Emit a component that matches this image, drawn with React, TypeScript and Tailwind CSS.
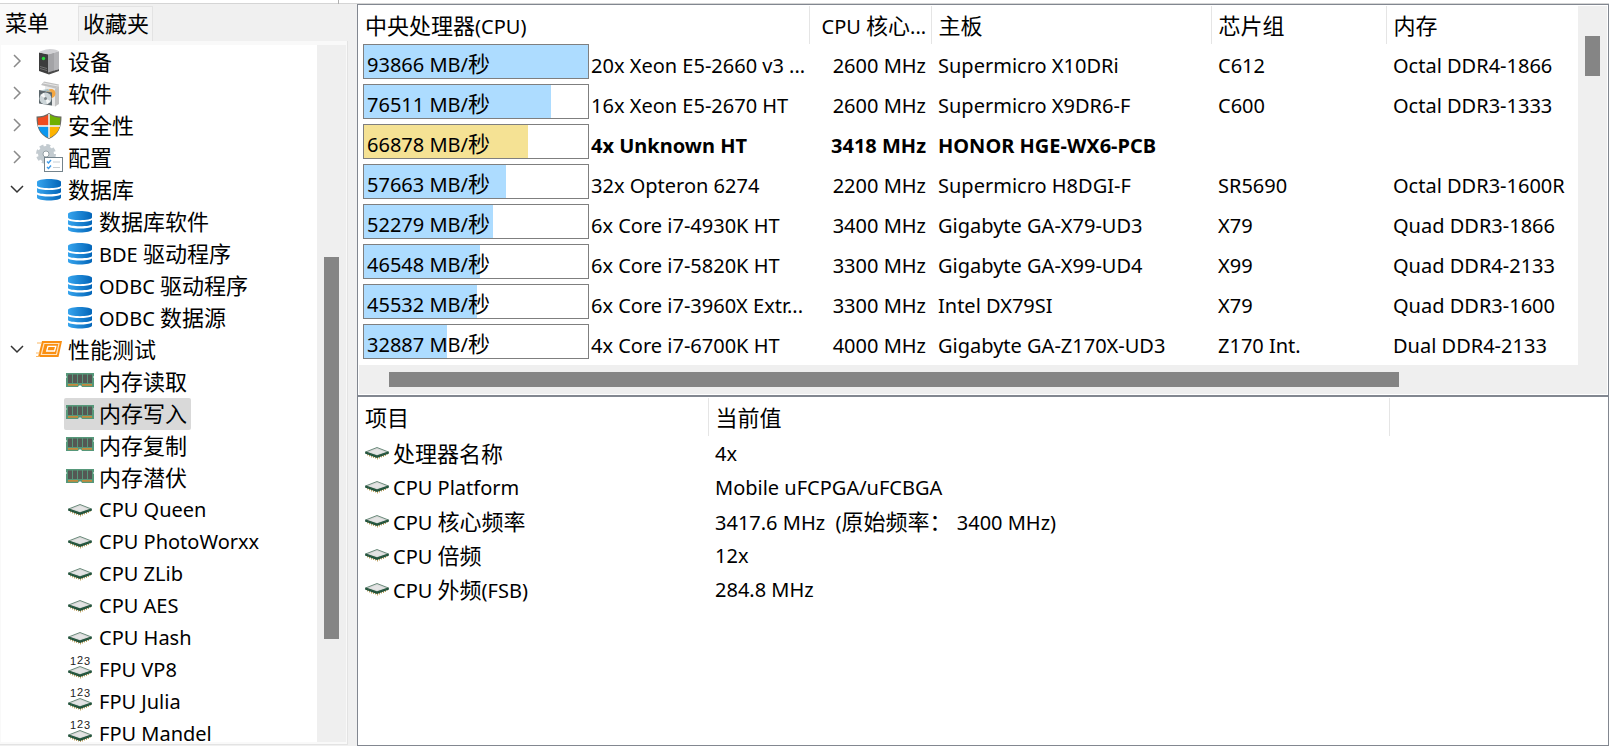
import type { ReactNode } from 'react';

type IconName = 'device' | 'software' | 'shield' | 'config' | 'database' | 'bench' | 'memory' | 'cpu' | 'fpu';

interface TreeItem {
  label: string;
  icon: IconName;
  state?: 'closed' | 'open';
  selected?: boolean;
}

interface Result {
  score: number;
  cpu: string;
  clock: string;
  board: string;
  chipset: string;
  memory: string;
  current?: boolean;
}

const tree: TreeItem[] = [
  { label: '设备', icon: 'device', state: 'closed' },
  { label: '软件', icon: 'software', state: 'closed' },
  { label: '安全性', icon: 'shield', state: 'closed' },
  { label: '配置', icon: 'config', state: 'closed' },
  { label: '数据库', icon: 'database', state: 'open' },
  { label: '数据库软件', icon: 'database' },
  { label: 'BDE 驱动程序', icon: 'database' },
  { label: 'ODBC 驱动程序', icon: 'database' },
  { label: 'ODBC 数据源', icon: 'database' },
  { label: '性能测试', icon: 'bench', state: 'open' },
  { label: '内存读取', icon: 'memory' },
  { label: '内存写入', icon: 'memory', selected: true },
  { label: '内存复制', icon: 'memory' },
  { label: '内存潜伏', icon: 'memory' },
  { label: 'CPU Queen', icon: 'cpu' },
  { label: 'CPU PhotoWorxx', icon: 'cpu' },
  { label: 'CPU ZLib', icon: 'cpu' },
  { label: 'CPU AES', icon: 'cpu' },
  { label: 'CPU Hash', icon: 'cpu' },
  { label: 'FPU VP8', icon: 'fpu' },
  { label: 'FPU Julia', icon: 'fpu' },
  { label: 'FPU Mandel', icon: 'fpu' },
];

const results: Result[] = [
  { score: 93866, cpu: '20x Xeon E5-2660 v3 ...', clock: '2600 MHz', board: 'Supermicro X10DRi', chipset: 'C612', memory: 'Octal DDR4-1866' },
  { score: 76511, cpu: '16x Xeon E5-2670 HT', clock: '2600 MHz', board: 'Supermicro X9DR6-F', chipset: 'C600', memory: 'Octal DDR3-1333' },
  { score: 66878, cpu: '4x Unknown HT', clock: '3418 MHz', board: 'HONOR HGE-WX6-PCB', chipset: '', memory: '', current: true },
  { score: 57663, cpu: '32x Opteron 6274', clock: '2200 MHz', board: 'Supermicro H8DGI-F', chipset: 'SR5690', memory: 'Octal DDR3-1600R' },
  { score: 52279, cpu: '6x Core i7-4930K HT', clock: '3400 MHz', board: 'Gigabyte GA-X79-UD3', chipset: 'X79', memory: 'Quad DDR3-1866' },
  { score: 46548, cpu: '6x Core i7-5820K HT', clock: '3300 MHz', board: 'Gigabyte GA-X99-UD4', chipset: 'X99', memory: 'Quad DDR4-2133' },
  { score: 45532, cpu: '6x Core i7-3960X Extr...', clock: '3300 MHz', board: 'Intel DX79SI', chipset: 'X79', memory: 'Quad DDR3-1600' },
  { score: 32887, cpu: '4x Core i7-6700K HT', clock: '4000 MHz', board: 'Gigabyte GA-Z170X-UD3', chipset: 'Z170 Int.', memory: 'Dual DDR4-2133' },
];

const details = [
  ['处理器名称', '4x'],
  ['CPU Platform', 'Mobile uFCPGA/uFCBGA'],
  ['CPU 核心频率', '3417.6 MHz  (原始频率： 3400 MHz)'],
  ['CPU 倍频', '12x'],
  ['CPU 外频(FSB)', '284.8 MHz'],
];

const maxScore = 93866;

// Han runs are set one step larger than the Latin text beside them.
function Txt({ children }: { children: string }) {
  return (
    <>
      {children.split(/([\u4e00-\u9fff：]+)/).map((part, i) =>
        i % 2 ? <span key={i} className="text-[22px]">{part}</span> : part
      )}
    </>
  );
}

function Chip() {
  return (
    <>
      <path d="M2.500 13v2.500M4.500 14v2.500M6.500 15v2.500M8.500 15.500v2.500M10.500 16v2.500M12.500 16.500v3M14.500 16v2.500M16.500 15v2.500M18.500 14.500v2.500M20.500 13.500v2.500M22.500 12.500v2" stroke="#c2a465" strokeWidth="1" />
      <path d="M0 12L12 16L24 12V13.500L12 18L0 13.500Z" fill="#1f5038" />
      <path d="M0.500 12L12 7.500L23.500 12L12 15.800Z" fill="#d9d9d9" stroke="#5c806e" strokeWidth="0.900" />
      <path d="M0.500 12L12 16L23.500 12" fill="none" stroke="#25563e" strokeWidth="1.300" />
      <path d="M5 12L12 9L19 12L12 14.300Z" fill="#e4e4e4" />
    </>
  );
}

function Icon({ name }: { name: IconName }) {
  switch (name) {
    case 'device':
      return (
        <svg viewBox="0 0 26 26" className="size-[26px] shrink-0">
          <path d="M3 22L13 25.500L23 22V20L12 22L3 20Z" fill="#4a4a4a" />
          <path d="M3 3.500L12 5V24.500L3 21.500Z" fill="#3d3d3d" />
          <path d="M12 5L23 2.500V20L12 23.500Z" fill="#a3a3a6" />
          <path d="M18 4L23 2.500V20L18 21.500Z" fill="#b3b3b6" />
          <path d="M3 3.500Q5 1 14 0Q21 0 23 2.500L12 5.500Z" fill="#d2d2d5" />
          <path d="M4 17.500L11 19.500M4 19.500L11 21.500" stroke="#888" strokeWidth="0.700" />
          <circle cx="7.500" cy="9.500" r="1.700" fill="#28d93a" />
        </svg>
      );
    case 'software':
      return (
        <svg viewBox="0 0 26 26" className="size-[26px] shrink-0">
          <path d="M9 5L20 7.500V25.500L9 24Z" fill="#e9e9e9" />
          <path d="M5 4L8 0.500L23 3.500L22 6L19 7.500Z" fill="#c0c0c0" />
          <path d="M7 2L22 5" stroke="#eaeaea" strokeWidth="0.900" />
          <path d="M19 7.500L23 5V23L19 25.500Z" fill="#c2c2c2" />
          <circle cx="15" cy="12.500" r="4.500" fill="#f4a640" />
          <path d="M3 9L16 11.500V24.500L3 22.500Z" fill="#5b666b" />
          <path d="M5 9.300L12 8L15 11Z" fill="#a9c0c3" />
          <circle cx="9.500" cy="17.500" r="6" fill="#ccd5d8" />
          <path d="M9.500 17.500L4.500 14.500L8 11.800ZM9.500 17.500L14.500 20L11 23.300Z" fill="#f6f8f8" />
          <circle cx="9.500" cy="17.500" r="1.500" fill="#7e878b" />
        </svg>
      );
    case 'shield':
      return (
        <svg viewBox="0 0 26 26" className="size-[26px] shrink-0">
          <path d="M13 0C9.500 2.500 5 3.500 0.500 3.500C0.500 14 3 21.500 13 26C23 21.500 25.500 14 25.500 3.500C21 3.500 16.500 2.500 13 0Z" fill="#6b6a64" />
          <path d="M12.500 1.500C9 3.800 5.500 4.500 1.700 4.700L2.200 12.500H12.500Z" fill="#ee4b20" />
          <path d="M13.500 1.500C17 3.800 20.500 4.500 24.300 4.700L23.800 12.500H13.500Z" fill="#6fb000" />
          <path d="M2.400 13.500C3.500 18.500 6.500 22 12.500 24.800V13.500Z" fill="#0c97ee" />
          <path d="M23.600 13.500C22.500 18.500 19.500 22 13.500 24.800V13.500Z" fill="#fdb300" />
          <path d="M13 1V25M2 13H24" stroke="#fff" strokeWidth="1.400" />
        </svg>
      );
    case 'config':
      return (
        <svg viewBox="0 0 26 26" className="size-[26px] shrink-0 overflow-visible">
          <circle cx="10" cy="9" r="8.500" fill="none" stroke="#c3cbd0" strokeWidth="3" strokeDasharray="4 2.675" />
          <circle cx="10" cy="9" r="5.500" fill="none" stroke="#c3cbd0" strokeWidth="5" />
          <circle cx="10" cy="9" r="3" fill="#fff" stroke="#8b979d" strokeWidth="0.900" />
          <rect x="8.500" y="12.500" width="18" height="14" fill="#fff" stroke="#74838c" />
          <path d="M11 16.500l1.500 1.500l2.500 -3M11 22l1.500 1.500l2.500 -3" fill="none" stroke="#3f9be8" strokeWidth="1.400" />
          <path d="M17 17H24M17 22.500H24" stroke="#c8ced2" />
        </svg>
      );
    case 'database':
      return (
        <svg viewBox="0 0 26 26" className="size-[26px] shrink-0">
          <defs>
            <linearGradient id="db">
              <stop offset="0" stopColor="#35a4ee" />
              <stop offset="1" stopColor="#0365b8" />
            </linearGradient>
          </defs>
          <path d="M1 5C1 1 25 1 25 5V8.500C25 12 1 12 1 8.500Z" fill="url(#db)" />
          <path d="M1 11C5 13.700 21 13.700 25 11V15C25 18 1 18 1 15Z" fill="url(#db)" />
          <path d="M1 17.500C5 20.200 21 20.200 25 17.500V20.500C25 24.500 1 24.500 1 20.500Z" fill="url(#db)" />
        </svg>
      );
    case 'bench':
      return (
        <svg viewBox="0 0 26 26" className="size-[26px] shrink-0">
          <path d="M6 4H26L22.500 20H2Z" fill="#f98f12" />
          <path d="M8 6.500H23L20.500 17.500H5.300Z" fill="none" stroke="#ffe3c0" strokeWidth="1.200" />
          <path d="M12 9.300H19.800L18.500 14H10.700Z" fill="#f98f12" stroke="#fff" strokeWidth="1.300" />
          <path d="M1 6H6M0 16H4M0 19.500H4" stroke="#fbb966" strokeWidth="1" />
        </svg>
      );
    case 'memory':
      return (
        <svg viewBox="0 0 28 26" className="h-[26px] w-7 shrink-0">
          <path d="M0 4H28V7L27 8L28 9V18H16L15 16.500H13L12 18H0V9L1 8L0 7Z" fill="#56987a" />
          <path d="M2 5.500H6V14H2ZM7 5.500H11V14H7ZM12 5.500H16V14H12ZM17 5.500H21V14H17ZM22 5.500H26V14H22Z" fill="#545854" />
          <path d="M2 15H12V16.800H2ZM16 15H26V16.800H16Z" fill="#c48a3c" />
        </svg>
      );
    case 'cpu':
      return (
        <svg viewBox="0 0 24 26" className="h-[26px] w-6 shrink-0">
          <Chip />
        </svg>
      );
    case 'fpu':
      return (
        <svg viewBox="0 0 24 26" className="h-[26px] w-6 shrink-0 overflow-visible">
          <g transform="translate(0 2)">
            <Chip />
          </g>
          <g fill="#222" fontFamily="Liberation Sans" fontSize="11">
            <text x="2" y="8">1</text>
            <text x="9" y="7">2</text>
            <text x="16" y="8">3</text>
          </g>
        </svg>
      );
  }
}

function TreeRow({ item }: { item: TreeItem }) {
  const open = item.state === 'open';
  return (
    <li className={item.state ? 'flex h-8 items-center pl-2' : 'flex h-8 pl-[63px]'}>
      {item.state && (
        <button aria-label={item.label} className="mr-[11px] flex w-4 justify-center">
          <svg viewBox="0 0 16 16" className="size-4" fill="none" stroke={open ? '#333' : '#8a8a8a'} strokeWidth="1.500">
            <path d={open ? 'M2 4L8 10L14 4' : 'M5 1L11 7L5 13'} />
          </svg>
        </button>
      )}
      <button className={`flex h-8 items-center rounded-xs ${item.state ? '' : 'pr-1 pl-[2px]'} ${item.selected ? 'bg-[#d9d9d9]' : ''}`}>
        <span className={`flex justify-center ${item.state ? 'w-[26px]' : 'w-7'}`}>
          <Icon name={item.icon} />
        </span>
        <span className={`whitespace-nowrap ${item.state ? 'ml-[6px]' : 'ml-[5px]'}`}><Txt>{item.label}</Txt></span>
      </button>
    </li>
  );
}

function Head({ children, className = '' }: { children?: ReactNode; className?: string }) {
  return <th className={`h-[38px] border-r border-[#e5e5e5] pt-[2px] text-left font-normal whitespace-nowrap ${className}`}>{children}</th>;
}

export default function App() {
  return (
    <div className="flex h-screen flex-col overflow-hidden bg-[#f0f0f0] font-['Noto_Sans','Noto_Sans_CJK_SC',sans-serif] text-[20px] leading-8 text-black">
      <div className="flex h-1 shrink-0 border-b border-[#d5d5d5] bg-white pl-[338px]">
        <span className="h-1 w-px bg-[#b0b0b0]" />
      </div>

      <main className="flex min-h-0 flex-1">
        <nav className="flex w-[357px] shrink-0 flex-col pr-[9px] pb-px">
          <div role="tablist" className="flex h-[37px] items-end">
            <button role="tab" aria-selected="true" className="h-full w-[78px] bg-[#f9f9f9] pl-[5px] text-left"><Txt>菜单</Txt></button>
            <button role="tab" aria-selected="false" className="h-[35px] w-[75px] border border-b-0 border-[#e3e3e3] bg-[#f3f3f3] pl-1 text-left"><Txt>收藏夹</Txt></button>
          </div>
          <div className="flex min-h-0 flex-1 border-r border-b border-[#e3e3e3] bg-[#f9f9f9] pt-1 pr-px pb-[2px] pl-px">
            <ul className="flex-1 overflow-hidden bg-white pt-px">
              {tree.map((item) => <TreeRow key={item.label} item={item} />)}
            </ul>
            <div className="flex w-[29px] flex-col items-center bg-[#efefef] pt-[212px]">
              <div className="h-[382px] w-[15px] bg-[#858585]" />
            </div>
          </div>
        </nav>

        <div className="flex min-w-0 flex-1 flex-col">
          <section className="border border-[#828790] bg-white p-px">
            <div className="flex">
              <div className="h-[359px] min-w-0 flex-1 overflow-hidden">
                <table className="w-full table-fixed border-collapse">
                  <colgroup>
                    <col className="w-[450px]" />
                    <col className="w-[122px]" />
                    <col className="w-[280px]" />
                    <col className="w-[175px]" />
                    <col />
                  </colgroup>
                  <thead>
                    <tr>
                      <Head className="pl-[6px]"><Txt>中央处理器(CPU)</Txt></Head>
                      <Head className="pl-3"><Txt>CPU 核心...</Txt></Head>
                      <Head className="pl-[7px]"><Txt>主板</Txt></Head>
                      <Head className="pl-[7px]"><Txt>芯片组</Txt></Head>
                      <Head className="border-r-0 pl-[7px]"><Txt>内存</Txt></Head>
                    </tr>
                  </thead>
                  <tbody>
                    {results.map((r) => (
                      <tr key={r.cpu} className={`h-10 whitespace-nowrap ${r.current ? 'font-bold' : ''}`}>
                        <td className="p-0 pl-1 align-top">
                          <div className="flex">
                            <div className="grid h-[35px] w-[226px] shrink-0 grid-cols-[100%] grid-rows-[33px] overflow-hidden border border-[#7f7f7f] font-normal">
                              <div
                                className={`col-start-1 row-start-1 max-w-full ${r.current ? 'bg-[#f5e294]' : 'bg-[#addcff]'}`}
                                style={{ width: `${(r.score / maxScore) * 100 + 2}%` }}
                              />
                              <span className="col-start-1 row-start-1 pt-[2px] pl-[3px]"><Txt>{`${r.score} MB/秒`}</Txt></span>
                            </div>
                            <span className="pt-[6px] pl-[2px]">{r.cpu}</span>
                          </div>
                        </td>
                        <td className="p-0 pt-[6px] pr-[5px] text-right align-top">{r.clock}</td>
                        <td className="p-0 pt-[6px] pl-[7px] align-top">{r.board}</td>
                        <td className="p-0 pt-[6px] pl-[7px] align-top">{r.chipset}</td>
                        <td className="p-0 pt-[6px] pl-[7px] align-top">{r.memory}</td>
                      </tr>
                    ))}
                  </tbody>
                </table>
              </div>
              <div className="flex w-[29px] justify-center bg-[#efefef] pt-[30px]">
                <div className="h-10 w-[15px] bg-[#858585]" />
              </div>
            </div>
            <div className="flex h-[29px] items-center bg-[#efefef] pr-[208px] pl-[30px]">
              <div className="h-[15px] flex-1 bg-[#858585]" />
            </div>
          </section>

          <section className="min-h-0 flex-1 border border-[#828790] bg-white p-px">
            <table className="w-full table-fixed border-collapse">
              <colgroup>
                <col className="w-[349px]" />
                <col className="w-[681px]" />
                <col />
              </colgroup>
              <thead>
                <tr>
                  <Head className="pl-[6px]"><Txt>项目</Txt></Head>
                  <Head className="pl-[7px]"><Txt>当前值</Txt></Head>
                  <Head className="border-r-0" />
                </tr>
              </thead>
              <tbody>
                {details.map(([name, value]) => (
                  <tr key={name} className="whitespace-pre">
                    <td className="p-0 pl-[6px]">
                      <div className="flex h-[34px] items-center gap-1">
                        <Icon name="cpu" />
                        <span className="pt-[2px]"><Txt>{name}</Txt></span>
                      </div>
                    </td>
                    <td className="p-0 pl-[7px]">
                      <div className="flex h-[34px] items-center">
                        <span className="pt-[2px]"><Txt>{value}</Txt></span>
                      </div>
                    </td>
                    <td />
                  </tr>
                ))}
              </tbody>
            </table>
          </section>
        </div>
      </main>
    </div>
  );
}
